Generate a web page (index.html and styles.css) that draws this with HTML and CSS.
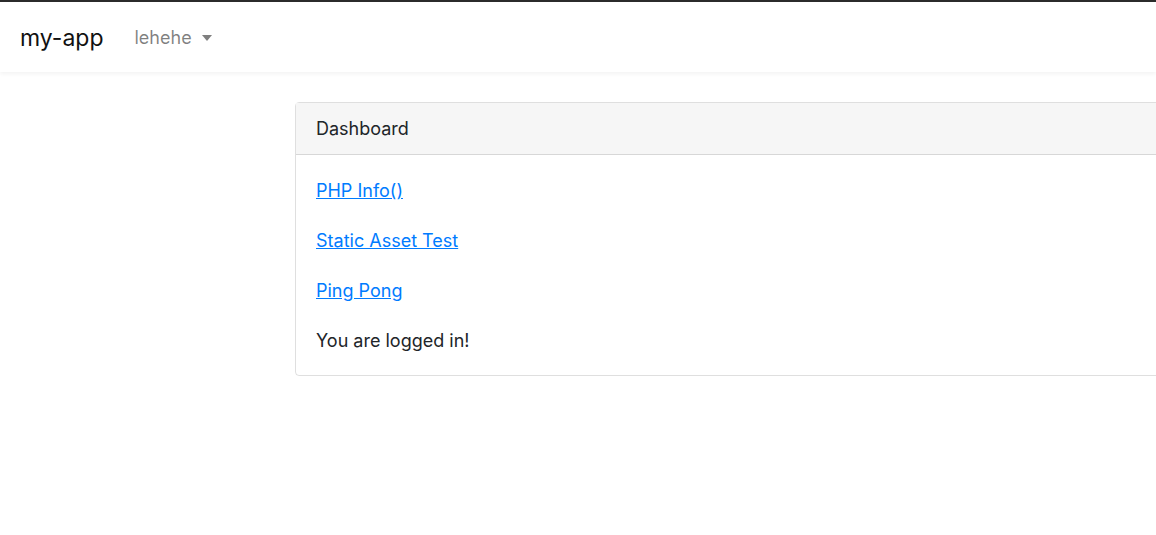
FILE: index.html
```html
<!DOCTYPE html>
<html lang="en">
<head>
  <meta charset="UTF-8" />
  <meta name="viewport" content="width=device-width, initial-scale=1.0"/>
  <title>my-app</title>
  <link rel="stylesheet" href="styles.css">
</head>
<body>

  <nav class="navbar">
    <a class="navbar-brand" href="#">my-app</a>
    <div class="nav-user">
      <a class="dropdown-toggle" href="#">lehehe</a>
    </div>
  </nav>

  <main class="content">
    <div class="card">
      <div class="card-header">Dashboard</div>
      <div class="card-body">
        <p><a href="#">PHP Info()</a></p>
        <p><a href="#">Static Asset Test</a></p>
        <p><a href="#">Ping Pong</a></p>
        <p>You are logged in!</p>
      </div>
    </div>
  </main>

</body>
</html>
```

FILE: styles.css
```css
html, body {
  overflow: hidden;
}
body {
  margin: 0;
  background: #ffffff;
  color: #212529;
  font-family: Inter, 'Liberation Sans', sans-serif;
  font-size: 18px;
  line-height: 1.5;
  border-top: 2px solid #2b2b2b;
}
a {
  color: #007bff;
}
.navbar {
  display: flex;
  align-items: center;
  height: 70px;
  padding: 0 20px;
  background: #fff;
  box-shadow: 0 2px 4px rgba(0,0,0,0.05);
}
.navbar-brand {
  font-size: 23px;
  color: #111;
  text-decoration: none;
  margin-right: 31px;
  padding-top: 2px;
}
.nav-user .dropdown-toggle {
  color: rgba(0,0,0,0.5);
  text-decoration: none;
  font-size: 18px;
}
.dropdown-toggle::after {
  content: "";
  display: inline-block;
  margin-left: 10px;
  vertical-align: 3px;
  border-top: 6px solid;
  border-right: 5.5px solid transparent;
  border-left: 5.5px solid transparent;
}
.content {
  padding: 30px 0 0 295px;
}
.card {
  width: 960px;
  border: 1px solid rgba(0,0,0,0.125);
  border-radius: 4px;
}
.card-header {
  padding: 12px 20px;
  background: #f6f6f6;
  border-bottom: 1px solid rgba(0,0,0,0.125);
}
.card-body {
  padding: 22px 20px 21px;
}
.card-body p {
  margin: 0 0 23px;
}
.card-body p:last-child {
  margin-bottom: 0;
}
```
